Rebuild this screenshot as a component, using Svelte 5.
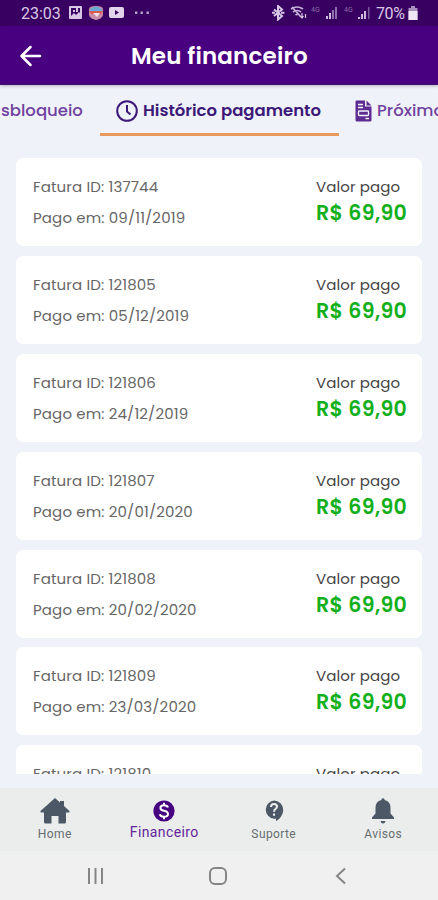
<script lang="ts">
  interface Invoice {
    id: string
    paidAt: string
  }

  const invoices: Invoice[] = [
    { id: '137744', paidAt: '09/11/2019' },
    { id: '121805', paidAt: '05/12/2019' },
    { id: '121806', paidAt: '24/12/2019' },
    { id: '121807', paidAt: '20/01/2020' },
    { id: '121808', paidAt: '20/02/2020' },
    { id: '121809', paidAt: '23/03/2020' },
    { id: '121810', paidAt: '20/04/2020' }
  ]
</script>

<div class="app">
  <div class="status-bar">
    <span class="clock">23:03</span>
    <svg class="notifications" width="84" height="14" viewBox="0 0 84 14">
      <path fill="#d8c8e6" fill-rule="evenodd" d="M1 0h11a1 1 0 0 1 1 1v11a1 1 0 0 1-1 1H1a1 1 0 0 1-1-1V1a1 1 0 0 1 1-1zm1 2v8l3-3 2 2 3-3 1 1V2z" />
      <path fill="#d8c8e6" d="M4 4h2v2H4zM7 2h2v4H7z" />
      <path fill="#c98ba6" d="M20 3q0-3 7-3t7 3v6q-1 4-7 5-6-1-7-5z" />
      <path fill="#6aa9d6" d="M21 3q6-5 12 0v3H21z" />
      <path fill="#d85a51" d="M20 5h14l-2 3H22z" />
      <path fill="#f0e1e7" d="M24 7h7l-3 4z" />
      <rect x="40" y="1" width="15" height="11" rx="2" fill="#e1d3ec" />
      <path fill="#3a0360" d="M46 4l4 2.500-4 2.500z" />
      <path fill="#b8a0cf" d="M66 5.500h2.400v2.400H66zm5.500 0h2.400v2.400h-2.400zm6 0h2.400v2.400h-2.400z" />
    </svg>
    <svg class="signals" width="104" height="16" viewBox="0 0 104 16">
      <path d="M3 4.500l8 6.500-4 3.500V1l4 3.500L3 11M1 7.700h3M10 7.700h3.500" fill="none" stroke="#d8c8e6" stroke-width="2" />
      <path d="M20 4q6-4 12 0M22 7q4-3 8 0M24.500 10q2-1.500 4 0M21 2l9 10" fill="none" stroke="#c5b0d7" stroke-width="1.700" />
      <path d="M31 8v5m-1.500-2l1.500 2 1.500-2M34.500 13V9" fill="none" stroke="#d8c8e6" stroke-width="1.200" />
      <text x="40" y="7">4G</text>
      <path fill="#8f70ad" d="M55 11h2v3h-2zm3-3h2v6h-2zm3-3h2v9h-2zm3-3h2v12h-2z" />
      <path fill="#cdbade" d="M55 11h2v3h-2zm3-3h2v6h-2z" />
      <text x="73" y="7">4G</text>
      <path fill="#cdbade" d="M87 12h2v2h-2zm3-3h2v5h-2zm3-3h2v8h-2z" />
      <path fill="#7a5a9b" d="M97 2h1.500v12H97z" />
    </svg>
    <span class="battery-level">70%</span>
    <svg class="battery" width="10" height="14" viewBox="0 0 10 14">
      <path fill="#a78fbe" d="M3 0h4v2h2.500v12H.500V2H3z" />
      <path fill="#efe5f5" d="M.500 5h9v9h-9z" />
    </svg>
  </div>

  <header class="header">
    <svg class="back" width="22" height="22" viewBox="0 0 22 22" fill="none" stroke="#fff" stroke-width="2.500" stroke-linecap="round" stroke-linejoin="round">
      <path d="M20 11H1.500M10.500 2L1.500 11l9 9" />
    </svg>
    <h1>Meu financeiro</h1>
  </header>

  <nav class="tabs">
    <div class="tab tab--previous"><span>sbloqueio</span></div>
    <div class="tab tab--active">
      <svg width="22" height="22" viewBox="0 0 22 22" fill="none" stroke="#3c1878" stroke-width="2">
        <circle cx="11" cy="11" r="9.800" />
        <path d="M11 5v6.500l3.500 3" />
      </svg>
      <span>Histórico pagamento</span>
    </div>
    <div class="tab tab--next">
      <svg width="17" height="22" viewBox="0 0 17 22">
        <path fill="#5e2b91" d="M1.500.500h8.500v6h6.500v13.500a1.500 1.500 0 0 1-1.500 1.500h-13A1.500 1.500 0 0 1 .500 20V1.500a1 1 0 0 1 1-1zM11.500.500l5 5h-5z" />
        <path stroke="#f1f3f9" stroke-width="1.300" d="M3 4.500h5M3 7.500h5M10.500 18.500H14" />
        <rect x="3.500" y="11" width="10" height="4.500" rx=".8" fill="none" stroke="#f1f3f9" stroke-width="1.300" />
      </svg>
      <span>Próximo</span>
    </div>
  </nav>

  <main class="list">
    {#each invoices as invoice (invoice.id)}
      <article class="card">
        <div class="details">
          <p>Fatura ID: {invoice.id}</p>
          <p>Pago em: {invoice.paidAt}</p>
        </div>
        <div class="payment">
          <p class="payment-label">Valor pago</p>
          <p class="payment-value">R$ 69,90</p>
        </div>
      </article>
    {/each}
  </main>

  <nav class="bottom-nav">
    <div class="nav-item">
      <svg width="30" height="26" viewBox="0 0 30 26">
        <path fill="#4c5866" d="M15 0l5 4.500V3h4v5l5.500 5q.5 1.500-1 1.500H26V24a1.500 1.500 0 0 1-1.500 1.500h-6V18h-7v7.500h-6A1.500 1.500 0 0 1 4 24v-9.500H1.500q-1.500 0-1-1.500z" />
      </svg>
      <span>Home</span>
    </div>
    <div class="nav-item nav-item--active">
      <svg width="22" height="26" viewBox="0 0 22 26">
        <circle cx="11" cy="13" r="10.600" fill="#470080" />
        <path d="M15 9.500q-.8-2.200-4-2.200-3.600 0-3.600 2.600 0 2.100 3.600 2.800 4 .8 4 3.200 0 2.800-4 2.800-3.500 0-4.200-2.500M11 4.800v2.500M11 18.700v2.500" fill="none" stroke="#fff" stroke-width="2" />
      </svg>
      <span>Financeiro</span>
    </div>
    <div class="nav-item">
      <svg width="20" height="26" viewBox="0 0 20 26">
        <path fill="#4c5866" d="M10 2.500a9.200 9.200 0 0 1 9.200 9.200c0 5-3.400 9.300-7.200 11.300v-2.200h-2A9.200 9.200 0 0 1 10 2.500z" />
        <path d="M7 9q0-3 3-3t3 2.600q0 1.500-1.500 2.400-1.500 1-1.500 2.800M10 15.500v2.300" fill="none" stroke="#edf0ef" stroke-width="2" />
      </svg>
      <span>Suporte</span>
    </div>
    <div class="nav-item">
      <svg width="24" height="26" viewBox="0 0 24 26">
        <path fill="#4c5866" d="M10.500 2V1q1.500-1.500 3 0v1c4 .8 6 3.800 6 8v5.500l3.500 4V21H1v-1.500l3.500-4V10c0-4.200 2-7.200 6-8zM9.500 23h5q-.5 2.500-2.500 2.500T9.500 23z" />
      </svg>
      <span>Avisos</span>
    </div>
  </nav>

  <div class="system-nav">
    <svg width="18" height="18" viewBox="0 0 18 18" stroke="#858585" stroke-width="2">
      <path d="M2 1v16M8.500 1v16M15 1v16" />
    </svg>
    <svg class="home-button" width="20" height="18" viewBox="0 0 20 18" fill="none" stroke="#858585" stroke-width="2">
      <rect x="2" y="1" width="16" height="16" rx="5" />
    </svg>
    <svg width="12" height="18" viewBox="0 0 12 18" fill="none" stroke="#858585" stroke-width="2">
      <path d="M10 1.500L2 9l8 7.500" />
    </svg>
  </div>
</div>

<style>
  :global(body) {
    margin: 0;
  }

  .app {
    width: 438px;
    height: 900px;
    display: flex;
    flex-direction: column;
    overflow: hidden;
    background-color: #eff2f8;
    font-family: Poppins, Inter, 'Noto Sans', sans-serif;
    white-space: nowrap;
  }

  svg {
    display: block;
    flex: none;
  }

  h1,
  p {
    margin: 0;
  }

  .status-bar {
    flex: none;
    height: 26px;
    box-sizing: border-box;
    display: flex;
    align-items: center;
    padding-left: 21px;
    background-color: #380060;
    color: #d8c8e6;
    font-family: Roboto, sans-serif;
    font-size: 16px;
    line-height: 26px;
  }

  .clock {
    width: 48px;
    padding-top: 2px;
  }

  .signals {
    margin-left: 118px;
  }

  .signals text {
    fill: #8e70a9;
    font: 7px Roboto, sans-serif;
  }

  .battery-level {
    width: 31px;
    padding-top: 2px;
    margin-left: 1px;
    letter-spacing: -0.4px;
  }

  .battery {
    margin-left: 1px;
  }

  .header {
    flex: none;
    height: 59px;
    box-sizing: border-box;
    display: grid;
    grid-template-columns: 111px 1fr;
    align-items: center;
    padding: 1px 0 0 20px;
    background-color: #480080;
    border-bottom: 1px solid #3c1467;
    box-shadow: 0 1px 3px rgba(50, 20, 90, 0.3);
    color: #fff;
  }

  h1 {
    font-size: 23px;
    font-weight: 600;
    line-height: 32px;
    letter-spacing: 0.18px;
  }

  .tabs {
    flex: none;
    height: 51px;
    display: flex;
    color: #7042a0;
    font-size: 16.5px;
    font-weight: 500;
  }

  .tab {
    flex: none;
    height: 51px;
    box-sizing: border-box;
    display: flex;
    align-items: center;
    padding-top: 3px;
    border-bottom: 3px solid transparent;
  }

  .tab--previous {
    width: 100px;
    padding-left: 1px;
  }

  .tab--active {
    width: 239px;
    padding-left: 16px;
    gap: 5px;
    border-bottom-color: #e99a5c;
    color: #3c1878;
    font-weight: 600;
  }

  .tab--next {
    padding-left: 16px;
    gap: 5px;
  }

  .list {
    height: 616px;
    flex: none;
    box-sizing: border-box;
    display: flex;
    flex-direction: column;
    gap: 9.9px;
    overflow: hidden;
    margin: 22px 16px 14px;
  }

  .card {
    flex: none;
    height: 88px;
    box-sizing: border-box;
    display: flex;
    justify-content: space-between;
    padding: 13px 15px 0 17px;
    border-radius: 7px;
    background-color: #fff;
  }

  .details {
    color: #666;
    font-size: 15px;
    line-height: 31px;
    letter-spacing: 0.14px;
  }

  .payment {
    width: 91px;
  }

  .payment-label {
    color: #444;
    font-size: 15px;
    line-height: 31px;
    letter-spacing: 0.1px;
  }

  .payment-value {
    color: #14b01c;
    font-size: 20.5px;
    font-weight: 600;
    line-height: 22px;
    letter-spacing: 0.3px;
  }

  .bottom-nav {
    flex: none;
    height: 63px;
    display: grid;
    grid-template-columns: repeat(4, 1fr);
    background-color: #eaedec;
  }

  .nav-item {
    display: flex;
    flex-direction: column;
    align-items: center;
    padding-top: 10px;
    color: #686d70;
    font-family: Roboto, sans-serif;
    font-size: 12px;
    line-height: 20px;
    letter-spacing: 0.4px;
  }

  .nav-item--active {
    color: #65259b;
    font-size: 14px;
    line-height: 17px;
  }

  .system-nav {
    flex: 1;
    display: flex;
    align-items: center;
    justify-content: space-between;
    padding: 0 91px 0 87px;
    background-color: #f0f0f0;
  }

  .home-button {
    margin-right: 4px;
  }
</style>
